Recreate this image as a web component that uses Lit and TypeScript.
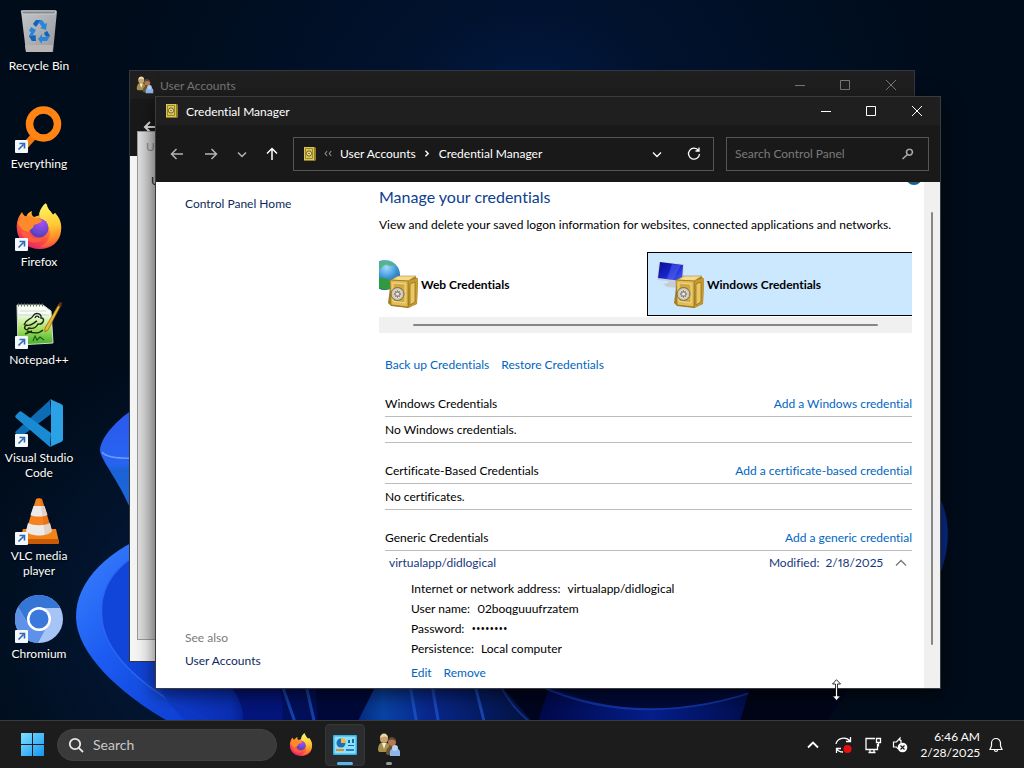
import { LitElement, html, svg, css } from "lit";
import { customElement, property } from "lit/decorators.js";

const shared = css`
  * { box-sizing: border-box; }
  button, input { font: inherit; color: inherit; background: none; border: 0; padding: 0; margin: 0; }
  button { display: flex; align-items: center; justify-content: center; }
  a { text-decoration: none; color: inherit; }
  svg { display: block; flex: none; }
  h1, h2, p, dl, dd, dt, ul { margin: 0; padding: 0; font-weight: 400; }
`;

const firefox = (size: number) => html`
  <svg width=${size} height=${size} viewBox="0 0 48 48" aria-hidden="true">
    <defs>
      <linearGradient id="ffBody" x1="0.8" y1="0.05" x2="0.3" y2="1">
        <stop offset="0" stop-color="#fff04a"/><stop offset="0.35" stop-color="#ffb02b"/>
        <stop offset="0.65" stop-color="#ff5a3a"/><stop offset="1" stop-color="#e9206b"/>
      </linearGradient>
      <linearGradient id="ffFlame" x1="0.5" y1="0" x2="0.6" y2="1">
        <stop offset="0" stop-color="#fff463"/><stop offset="0.5" stop-color="#ffcb34"/><stop offset="0.8" stop-color="#ff8a2a"/><stop offset="1" stop-color="#fb4a48"/>
      </linearGradient>
      <radialGradient id="ffGlobe" cx="0.6" cy="0.2" r="0.9">
        <stop offset="0" stop-color="#b04cf0"/><stop offset="0.6" stop-color="#6a48d0"/><stop offset="1" stop-color="#4a3aa8"/>
      </radialGradient>
    </defs>
    <path d="M7 9c1 3 3 4 4 5 1-3 3-5 6-6-1 3 0 5 2 6l9-3c1-4 1-8 4-10 0 5 4 7 6 11l2-2c5 5 7 11 6 18-1 11-10 18-21 18C12 46 3 38 2 27c-1-7 1-13 5-18z" fill="url(#ffBody)"/>
    <path d="M24 11c1-5 4-9 7-11 0 5 5 8 7 12l2-2c8 9 7 22-1 30-5 4-10 5-14 4 9-4 13-14 8-21-2-4-7-5-9-12z" fill="url(#ffFlame)"/>
    <circle cx="24" cy="25" r="9.500" fill="url(#ffGlobe)"/>
    <path d="M3 20c3-7 10-9 17-5 2 1 5 1 7 2-1 3-5 4-8 5-1 5-5 4-5 7-5 0-9-4-11-9z" fill="#ff8a2a"/>
    <path d="M14 29c1 7 9 8 15 5-4 8-17 7-21-1-2-3-3-5-4-8 3 3 6 5 10 4z" fill="#ff5a42"/>
  </svg>`;

const safe = (size: number) => html`
  <svg width=${size} height=${size} viewBox="0 0 14 14" aria-hidden="true">
    <path d="M1 0h11l1 1v12l-1 1H1z" fill="#8f7a25"/>
    <path d="M1 0h10v13H1z" fill="#d9c65a"/>
    <path d="M2.500 1.500h7v10h-7z" fill="none" stroke="#9c8729"/>
    <circle cx="6" cy="6.500" r="2.600" fill="#e9e2a0" stroke="#71611c"/>
    <circle cx="6" cy="6.500" r="0.800" fill="#5f5118"/>
  </svg>`;

const vault = svg`
  <path d="M20 20l7-4 18 1 2 3-1 24-9 4-17-2-3-3z" fill="#a67f22"/>
  <path d="M37 21l10-3-1 25-8 5z" fill="#c69a2f"/>
  <path d="M39 24l5-2v20l-5 3z" fill="#e9c766" stroke="#8e6b18" stroke-width="0.700"/>
  <path d="M20 20l7-4h18l-8 5z" fill="#f3dc8e" stroke="#9a7a25" stroke-width="0.500"/>
  <path d="M19 20l18 1v26l-17-2z" fill="#e2bd55" stroke="#987421" stroke-width="0.800"/>
  <path d="M22 23l12 1v19l-12-2z" fill="#d2a941" stroke="#f6e3a0" stroke-width="0.800"/>
  <circle cx="26.500" cy="34" r="6.500" fill="#cfc6b0" stroke="#776a4c" stroke-width="1"/>
  <circle cx="26.500" cy="34" r="4" fill="#a99f9a" stroke="#efe9da" stroke-width="1"/>
  <path d="M26.500 30v8M22.500 34h8M24 31l5 6M29 31l-5 6" stroke="#756a60" stroke-width="0.600"/>
  <circle cx="26.500" cy="34" r="1.500" fill="#eee"/>`;

const webVault = html`
  <svg width="48" height="48" viewBox="0 0 48 48" aria-hidden="true">
    <defs><radialGradient id="globe" cx="0.55" cy="0.25" r="0.7">
      <stop offset="0" stop-color="#9fdcff"/><stop offset="0.5" stop-color="#3b93d6"/><stop offset="1" stop-color="#12508f"/>
    </radialGradient></defs>
    <circle cx="14" cy="15" r="15" fill="url(#globe)"/>
    <path d="M1 8C5 1 16-1 24 4c2 1-2 1-4 2-3 0-4-2-6-1-4 2-3 4-7 5-2 0-4 0-6-2z" fill="#4fb56a" opacity="0.800"/>
    <path d="M6 19c5-3 9 0 14 1l-1 9c-5 2-12 0-16-4z" fill="#2f9a41"/>
    ${vault}
  </svg>`;

const pcVault = html`
  <svg width="48" height="48" viewBox="0 0 48 48" aria-hidden="true">
    <defs><linearGradient id="screen" x1="0" y1="0" x2="1" y2="1">
      <stop offset="0" stop-color="#0a0f8e"/><stop offset="0.5" stop-color="#1723c9"/><stop offset="1" stop-color="#4d63f4"/>
    </linearGradient></defs>
    <path d="M2 2l25 2-1 19L0 20z" fill="#c9cfe3"/>
    <path d="M3 2l23 3-1 16L1 18z" fill="url(#screen)"/>
    <path d="M15 4l9 1-8 15-6-1z" fill="#5b71f5" opacity="0.450"/>
    <path d="M11 21l7 1 1 4 3 2-12-1-4-3 5-1z" fill="#c8cbd3"/>
    ${vault}
  </svg>`;

const people = (size: number) => html`
  <svg width=${size} height=${size} viewBox="0 0 24 24" aria-hidden="true">
    <circle cx="7" cy="6" r="4" fill="#c9a26c"/><path d="M3 5c0-6 8-6 8 0-2-2-5-2-8 0z" fill="#e8d9a4"/>
    <path d="M1 17c0-6 3-8 6-8s6 2 6 7l-4 3H2z" fill="#a5914c"/>
    <path d="M5 10l2 6 2-6z" fill="#f4f0dd"/>
    <circle cx="15" cy="9" r="4" fill="#b27a50"/><path d="M11 8c0-6 8-5 8 1-2-3-5-3-8-1z" fill="#5e4630"/>
    <path d="M9 21c0-6 3-8 6-8s6 2 6 8l-4 1h-6z" fill="#6a5636"/>
    <path d="M13 19c0-5 10-5 10 0v4H13z" fill="#8fb7ea"/><circle cx="18" cy="15" r="3" fill="#b9d2f3"/>
  </svg>`;

const art: Record<string, unknown> = {
  bin: html`<svg width="48" height="48" viewBox="0 0 48 48" aria-hidden="true">
    <defs><linearGradient id="pail" x1="0" y1="0" x2="1" y2="1"><stop offset="0" stop-color="#c3c6ca"/><stop offset="1" stop-color="#96999c"/></linearGradient></defs>
    <path d="M6 4l4-1h28l4 1-4 41H11z" fill="url(#pail)"/>
    <path d="M6 4l4-1h28l4 1-2 3H8z" fill="#85898c"/><path d="M8 7h32l1-3H6z" fill="none" stroke="#c9cccf"/>
    <path d="M10 38h28l-1 7H11z" fill="#b9b5b4"/>
    <g fill="#2a86d8"><path d="M18 17l3-4h6l3 4 2-1-1 7-6-2 2-1-3-4-2 3z"/><path d="M16 20l5 3-3 5h3v6h-4l-3-5 2-4-2-1z"/><path d="M32 24l3 5-3 5h-5v3l-4-5 4-5v3h4l-2-3z"/></g>
    <path d="M18 17l3-4h4l-4 7zM14 29h6l1 5h-4zM32 24l3 5h-4l-2-3z" fill="#1762b4"/>
  </svg>`,
  everything: html`<svg width="48" height="48" viewBox="0 0 48 48" aria-hidden="true">
    <path d="M19 31L8 43" stroke="#f47a10" stroke-width="7"/><circle cx="28.500" cy="19" r="14" fill="none" stroke="#ff8413" stroke-width="7.500"/>
  </svg>`,
  firefox: firefox(48),
  notepad: html`<svg width="48" height="48" viewBox="0 0 48 48" aria-hidden="true">
    <defs><linearGradient id="sheet" x1="0" y1="0" x2="0" y2="1"><stop offset="0.200" stop-color="#fafff6"/><stop offset="0.600" stop-color="#a5e05e"/><stop offset="1" stop-color="#3fae2a"/></linearGradient></defs>
    <path d="M2 4h26l8 6 2 32-35 2z" fill="url(#sheet)" stroke="#d5dccd"/>
    <path d="M3 4h25" stroke="#6d7568" stroke-width="3" stroke-dasharray="1 2"/>
    <path d="M5 10h26M4 14h30" stroke="#b9c5d0" stroke-width="0.700"/>
    <path d="M9 24c3-7 7-5 9-9 2-4 9-3 8 2 5 0 2 7-3 6-2 4-5 5-9 4-3 4-6 0-3-3 5 2 7-2 11-4M12 30c5 2 12 3 16-1M20 17c1-3 4-2 4 0M10 33l7-3" fill="none" stroke="#1c2a12" stroke-width="1.400"/>
    <path d="M18 40l2-5 2 4 3-3 4 3" fill="none" stroke="#195a12" stroke-width="1.100"/>
    <path d="M30 27L44 3l2 1-13 25-3 2z" fill="#eebb32" stroke="#855c13" stroke-width="0.700"/><path d="M43 5l2-4 2 1-1 4z" fill="#6e2f20"/>
  </svg>`,
  code: html`<svg width="48" height="48" viewBox="0 0 48 48" aria-hidden="true">
    <path d="M35 1L1 32c-1 1-1 2 0 3l3 2c1 1 2 1 3 0L36 15z" fill="#0c6db5"/>
    <path d="M7 13c-1-1-2-1-3 0l-3 3c-1 1-1 2 0 3l34 29 1-14z" fill="#1a8ad3"/>
    <path d="M35 1c1-1 1-1 2 0l9 4c2 1 2 2 2 3v32c0 1 0 2-2 3l-9 4c-1 1-1 1-2 0l1-1V2z" fill="#2ba2e6"/>
  </svg>`,
  vlc: html`<svg width="48" height="48" viewBox="0 0 48 48" aria-hidden="true">
    <path d="M8 32h33l3 13c0 1 0 2-2 2H6c-2 0-2-1-2-2z" fill="#f08417"/><path d="M5 42h38l1 3c0 1 0 2-2 2H6c-2 0-2-1-2-2z" fill="#c95a08"/>
    <path d="M21 2c1-1 5-1 6 0l10 32c-4 6-22 6-26 0z" fill="#f5821f"/>
    <path d="M18.500 9h11l3 9c-4 2-13 2-17 0zM13 26c6 3 16 3 22 0l2 8c-4 6-22 6-26 0z" fill="#ecebea"/>
    <path d="M27 2l10 32c-2 2-4 3-7 4L25 2z" fill="#a83e00" opacity="0.150"/>
  </svg>`,
  chromium: html`<svg width="48" height="48" viewBox="0 0 48 48" aria-hidden="true">
    <circle cx="24" cy="24" r="24" fill="#a6c4f6"/>
    <path d="M24 0a24 24 0 0 1 21 13H24L14 30 3 12A24 24 0 0 1 24 0z" fill="#3575d6"/>
    <path d="M3 12l11 18 10 6 6-1-7 13A24 24 0 0 1 3 12z" fill="#5d92e8"/>
    <circle cx="24" cy="24" r="12" fill="#fff"/><circle cx="24" cy="24" r="9.500" fill="#3a78dc"/>
  </svg>`,
};

const arrow = (d: string, size = 16, width = 1) => html`
  <svg width=${size} height=${size} viewBox="0 0 16 16" fill="none" stroke="currentColor" stroke-width=${width} aria-hidden="true"><path d=${d}/></svg>`;

@customElement("desktop-wallpaper")
class DesktopWallpaper extends LitElement {
  static styles = css`:host { display: block; } svg { display: block; width: 100%; height: 100%; }`;
  render() {
    return html`<svg viewBox="0 0 1024 768" preserveAspectRatio="xMidYMid slice" aria-hidden="true">
      <defs>
        <radialGradient id="glow" gradientUnits="userSpaceOnUse" cx="530" cy="150" r="420"><stop offset="0" stop-color="#021c4e"/><stop offset="0.350" stop-color="#01122e"/><stop offset="1" stop-color="#000c1a"/></radialGradient>
        <radialGradient id="haze" gradientUnits="userSpaceOnUse" cx="230" cy="620" r="280"><stop offset="0" stop-color="#041c42"/><stop offset="1" stop-color="#041c42" stop-opacity="0"/></radialGradient>
        <linearGradient id="petalA" x1="0" y1="0" x2="1" y2="1"><stop offset="0" stop-color="#3f86ff"/><stop offset="0.400" stop-color="#1c5cf2"/><stop offset="1" stop-color="#0733c8"/></linearGradient>
        <linearGradient id="petalB" x1="0" y1="0" x2="0" y2="1"><stop offset="0" stop-color="#2b56ee"/><stop offset="0.500" stop-color="#2864f0"/><stop offset="0.550" stop-color="#1a62d6"/><stop offset="1" stop-color="#1b6be0"/></linearGradient>
        <linearGradient id="fold" x1="0" y1="0" x2="1" y2="0"><stop offset="0" stop-color="#1040d8"/><stop offset="0.200" stop-color="#0a2cae"/><stop offset="0.260" stop-color="#021070"/><stop offset="0.460" stop-color="#010f55"/><stop offset="0.600" stop-color="#0a49b4"/><stop offset="0.720" stop-color="#0a2a9a"/><stop offset="1" stop-color="#02123f"/></linearGradient>
        <linearGradient id="bowl" x1="0" y1="0" x2="1" y2="0"><stop offset="0" stop-color="#010848"/><stop offset="0.500" stop-color="#051f8c"/><stop offset="1" stop-color="#010a40"/></linearGradient>
      </defs>
      <rect width="1024" height="768" fill="url(#glow)"/>
      <rect width="520" height="768" fill="url(#haze)"/>
      <path d="M140 405c-18 10-39 30-40 45 0 10 22 34 34 68l20 10V400z" fill="url(#petalB)"/>
      <path d="M102 452c4 6 20 7 40 6" stroke="#6a9cff" fill="none" stroke-width="1.500"/>
      <path d="M160 530c-50 18-85 50-84 88 1 34 40 74 95 105h80V530z" fill="url(#petalA)"/>
      <path d="M150 548c-35 15-52 40-48 72 4 38 50 76 110 102h60V548z" fill="#1144d8"/>
      <path d="M150 548c-35 15-52 40-48 72 4 38 50 76 110 102" fill="none" stroke="#2a68f4" stroke-width="1.500"/>
      <path d="M155 680h380v60H205c-20-18-40-38-50-60z" fill="url(#fold)" opacity="0.900"/>
      <path d="M225 680c14 14 20 30 18 45h39c2-18 0-30-4-45z" fill="#04157c"/>
      <path d="M282 685l14 40M306 685l9 40M410 685l7 40M432 685l7 40M475 685l10 40" stroke="#2360e0" stroke-width="3" fill="none" opacity="0.600"/>
      <path d="M500 685c8 16 20 30 34 40" stroke="#1a3a9a" stroke-width="2" fill="none" opacity="0.700"/>
      <path d="M316 685h60l-20 40h-38z" fill="#01093a"/>
      <path d="M500 685h350l-28 45H540z" fill="#01051f"/>
      <path d="M550 685c60 32 140 30 220 0l-10 45H535z" fill="url(#bowl)"/>
      <path d="M550 685c60 32 140 30 220 0z" fill="#010a38"/>
      <path d="M540 686c70 32 150 30 230 0" fill="none" stroke="#1540b8" stroke-width="2" opacity="0.700"/>
      <path d="M750 688h90c-8 14-10 24-14 40h-88z" fill="#010517"/>
      <path d="M938 495c12 20 14 50 0 85z" fill="#082c8c"/>
    </svg>`;
  }
}

@customElement("desktop-shortcut")
class DesktopShortcut extends LitElement {
  @property() label = "";
  @property() icon = "";
  @property({ type: Boolean }) link = false;
  static styles = [shared, css`
    :host { display: block; height: 98px; }
    .cell { width: 100%; flex-direction: column; gap: 3px; color: #fff; font-size: 12px; line-height: 15px; text-shadow: 0 1px 2px #000; }
    .pic { position: relative; }
    .badge { position: absolute; left: 0; bottom: 0; }
  `];
  render() {
    return html`<button class="cell">
      <span class="pic">${art[this.icon]}
        ${this.link ? html`<svg class="badge" width="13" height="13" viewBox="0 0 13 13" aria-hidden="true"><rect width="13" height="13" rx="1" fill="#f4f7fb"/><path d="M3.500 9.500l5-5M4.500 3.500h5v5" fill="none" stroke="#2c6ab5" stroke-width="1.600"/></svg>` : ""}
      </span>
      <span>${this.label}</span>
    </button>`;
  }
}

@customElement("caption-buttons")
class CaptionButtons extends LitElement {
  static styles = [shared, css`
    :host { display: flex; align-self: stretch; }
    button { width: 46px; }
  `];
  render() {
    const d = ["M4 8.500h10", "M3.500 3.500h9v9h-9z", "M3 3l10 10M13 3L3 13"];
    return html`${["Minimize", "Maximize", "Close"].map((n, i) => html`<button aria-label=${n}>${arrow(d[i])}</button>`)}`;
  }
}

@customElement("accounts-window")
class AccountsWindow extends LitElement {
  static styles = [shared, css`
    :host { display: flex; flex-direction: column; background: #f5f5f5; border: 1px solid #34383c; overflow: hidden; font-size: 12px; }
    .title { display: flex; align-items: center; height: 28px; padding-left: 6px; gap: 6px; background: #1f1f1f; color: #777; }
    .title h2 { flex: 1; font-size: 12px; }
    .nav { height: 57px; background: #191919; color: #ddd; padding: 20px 12px; }
    .dialog { position: absolute; left: 7px; top: 60px; bottom: 21px; width: 300px; background: linear-gradient(90deg, #e0e0e0, #c4c4c4 20px); border: 1px solid #9b9b9b; color: #8a8a8a; padding: 6px 8px; }
    .dialog p { line-height: 18px; }
    .dialog .second { color: #222; padding: 16px 5px; }
  `];
  render() {
    return html`
      <div class="title">${people(18)}<h2>User Accounts</h2><caption-buttons></caption-buttons></div>
      <div class="nav">${arrow("M8 3L3 8l5 5M3 8h11", 16, 2)}</div>
      <div class="dialog"><p>User Accounts</p><p class="second">Users</p></div>`;
  }
}

@customElement("credential-section")
class CredentialSection extends LitElement {
  @property() heading = "";
  @property() action = "";
  @property() empty = "";
  static styles = [shared, css`
    :host { display: block; margin-left: 6px; }
    .head { display: flex; justify-content: space-between; height: 26px; line-height: 26px; border-bottom: 1px solid #bcbcbc; }
    .head h2 { font-size: inherit; }
    a { color: #0066bf; }
    .empty { height: 26px; line-height: 26px; border-bottom: 1px solid #bcbcbc; }
    .gap { height: 15px; }
  `];
  render() {
    return html`<div class="head"><h2>${this.heading}</h2><a href="#">${this.action}</a></div>
      ${this.empty ? html`<p class="empty">${this.empty}</p><div class="gap"></div>` : html`<slot></slot>`}`;
  }
}

@customElement("credential-window")
class CredentialWindow extends LitElement {
  static styles = [shared, css`
    :host { display: flex; flex-direction: column; background: #fff; border: 1px solid #3c3c3c; overflow: hidden; color: #000; font-size: 12px; box-shadow: 0 6px 18px #0009; }
    .title { display: flex; align-items: center; flex: none; height: 28px; padding-left: 9px; gap: 7px; background: #1f1f1f; color: #fff; }
    .title h1 { flex: 1; font-size: 12px; }
    .nav { display: flex; align-items: center; flex: none; height: 57px; padding: 0 11px 0 9px; background: #191919; color: #fff; }
    .nav > button { width: 24px; height: 24px; color: #b4b4b4; }
    .nav .fwd { margin-left: 10px; }
    .nav .recent { margin-left: 9px; width: 20px; }
    .nav .up { margin-left: 8px; color: #fff; margin-right: 9px; }
    .box { display: flex; align-items: center; height: 34px; border: 1px solid #555; padding: 0 9px; }
    .path { flex: 1; gap: 6px; }
    .path .more { color: #8c8c8c; }
    .path .icons { display: flex; margin-left: auto; gap: 21px; align-items: center; padding-right: 2px; }
    .find { width: 203px; margin-left: 12px; padding: 0 12px 0 8px; }
    .find input { flex: 1; min-width: 0; outline: 0; }
    .find input::placeholder { color: #7b7b7b; opacity: 1; }
    .find svg { color: #aaa; }
    .body { display: flex; flex: 1; min-height: 0; position: relative; }
    .side { display: flex; flex-direction: column; width: 223px; padding: 13px 29px 18px; color: #0c2a5c; line-height: 18px; }
    .side .also { margin-top: auto; margin-bottom: 5px; color: #7a7a7a; }
    main { flex: 1; min-width: 0; padding: 3px 12px 0 0; }
    main h1 { font-size: 16px; line-height: 24px; color: #0d4090; }
    .lead { line-height: 18px; margin: 7px 0 18px; white-space: nowrap; }
    .tabs { display: flex; overflow: hidden; }
    .tab { flex: none; width: 286px; height: 64px; justify-content: flex-start; padding-left: 9px; gap: 2px; border: 1px solid transparent; font-weight: 700; }
    .tab.web { margin-left: -18px; }
    .tab.on { background: #cce8ff; border-color: #000; }
    .hbar { height: 16px; margin: 1px 0 23px; background: #f0f0f0; padding: 7px 34px; }
    .hbar i { display: block; height: 2px; border-radius: 1px; background: #868686; }
    .links { display: flex; gap: 12px; margin: 0 0 17px 6px; line-height: 18px; color: #0066bf; }
    .row { display: flex; align-items: center; height: 23px; padding: 0 3px 0 4px; color: #16387c; }
    .row .date { margin-left: auto; margin-right: 10px; white-space: pre; }
    .row svg { color: #777; }
    dl { padding: 5px 0 0 26px; line-height: 20px; }
    dl div { display: flex; gap: 7px; }
    .secret { font-family: "Open Sans", sans-serif; }
    .edit { display: flex; gap: 12px; padding: 4px 0 0 26px; line-height: 20px; color: #0066bf; }
    .vbar { width: 16px; background: #f0f0f0; padding: 30px 7px 43px 7px; }
    .vbar i { display: block; height: 100%; border-radius: 1px; background: #868686; }
    .help { position: absolute; right: 18px; top: -13px; width: 16px; height: 16px; border-radius: 8px; background: #17608d; }
    .clip { position: absolute; inset: 0; overflow: hidden; pointer-events: none; }
  `];
  render() {
    return html`
      <div class="title">${safe(14)}<h1>Credential Manager</h1><caption-buttons></caption-buttons></div>
      <div class="nav">
        <button aria-label="Back">${arrow("M7.500 3L2.500 8l5 5M3 8h11", 16, 1.5)}</button>
        <button class="fwd" aria-label="Forward">${arrow("M8.500 3l5 5-5 5M13 8H2", 16, 1.5)}</button>
        <button class="recent" aria-label="Recent locations">${arrow("M4 6.500l4 4 4-4", 16, 1.5)}</button>
        <button class="up" aria-label="Up">${arrow("M3 7.500l5-5 5 5M8 3v11", 16, 1.5)}</button>
        <div class="box path">${safe(14)}
          <span class="more">${arrow("M6 4.500L3 8l3 3.500M12 4.500L9 8l3 3.500", 11, 1.5)}</span>
          <a href="#">User Accounts</a>${arrow("M5 4l4 4-4 4", 11, 2)}<a href="#">Credential Manager</a>
          <span class="icons">
            <button aria-label="Previous locations">${arrow("M4 6.500l4 4 4-4", 16, 1.3)}</button>
            <button aria-label="Refresh">${arrow("M12.500 4.500A5.500 5.500 0 1 0 13.500 8M13 1.500V5H9.500", 16, 1.3)}</button>
          </span>
        </div>
        <div class="box find"><input type="text" aria-label="Search Control Panel" placeholder="Search Control Panel">
          ${arrow("M9.500 3.200a3 3 0 1 1-0.100 0M7.500 8.500L2.500 13", 16, 1.6)}</div>
      </div>
      <div class="body">
        <nav class="side"><a href="#">Control Panel Home</a><span class="also">See also</span><a href="#">User Accounts</a></nav>
        <main>
          <h1>Manage your credentials</h1>
          <p class="lead">View and delete your saved logon information for websites, connected applications and networks.</p>
          <div class="tabs">
            <button class="tab web">${webVault}Web Credentials</button>
            <button class="tab on">${pcVault}Windows Credentials</button>
          </div>
          <div class="hbar"><i></i></div>
          <div class="links"><a href="#">Back up Credentials</a><a href="#">Restore Credentials</a></div>
          <credential-section heading="Windows Credentials" action="Add a Windows credential" empty="No Windows credentials."></credential-section>
          <credential-section heading="Certificate-Based Credentials" action="Add a certificate-based credential" empty="No certificates."></credential-section>
          <credential-section heading="Generic Credentials" action="Add a generic credential">
            <div class="row"><span>virtualapp/didlogical</span><span class="date">Modified:  2/18/2025</span>${arrow("M3 10.500l5-5 5 5", 16, 1.3)}</div>
            <dl>
              <div><dt>Internet or network address:</dt><dd>virtualapp/didlogical</dd></div>
              <div><dt>User name:</dt><dd>02boqguuufrzatem</dd></div>
              <div><dt>Password:</dt><dd class="secret">••••••••</dd></div>
              <div><dt>Persistence:</dt><dd>Local computer</dd></div>
            </dl>
            <div class="edit"><a href="#">Edit</a><a href="#">Remove</a></div>
          </credential-section>
        </main>
        <div class="vbar"><i></i></div>
        <div class="clip"><div class="help"></div></div>
      </div>`;
  }
}

@customElement("task-bar")
class TaskBar extends LitElement {
  static styles = [shared, css`
    :host { display: flex; align-items: center; height: 48px; padding: 0 20px 0 20px; background: #1c1c1c; border-top: 1px solid #393a3c; color: #fff; font-size: 12px; }
    .search { display: flex; align-items: center; gap: 9px; width: 220px; height: 32px; margin-left: 12px; padding: 0 10px; border-radius: 16px; background: #3a3a3a; border: 1px solid #424242; }
    .search input { flex: 1; min-width: 0; outline: 0; font-size: 14px; }
    .search input::placeholder { color: #c8c8c8; opacity: 1; }
    .app { position: relative; width: 40px; height: 42px; border-radius: 4px; margin-left: 4px; }
    .app.on { background: #2b2c2d; border: 1px solid #353637; }
    .app::after { content: ""; position: absolute; bottom: 1px; height: 3px; border-radius: 2px; }
    .app.on::after { width: 16px; background: #58b8ee; bottom: 0; }
    .app.idle::after { width: 6px; background: #999; }
    .tray { display: flex; align-items: center; margin-left: auto; gap: 8px; }
    .tray .mid { margin: 0 5px; display: flex; align-items: center; gap: 9px; }
    .clock { flex-direction: column; align-items: flex-end; line-height: 16px; }
  `];
  render() {
    return html`
      <button aria-label="Start"><svg width="25" height="24" viewBox="0 0 25 24" aria-hidden="true"><defs><linearGradient id="win" x1="0" y1="0" x2="1" y2="1"><stop offset="0" stop-color="#7fe0ff"/><stop offset="1" stop-color="#1496f0"/></linearGradient></defs><path d="M1 0h11v11H1zM13 0h11v11H13zM1 12h11v11H1zM13 12h11v11H13z" fill="url(#win)"/></svg></button>
      <label class="search"><svg width="16" height="16" viewBox="0 0 16 16" fill="none" stroke="#e8e8e8" stroke-width="1.800" aria-hidden="true"><circle cx="7" cy="7" r="5.200"/><path d="M10.800 10.800L15 15"/></svg><input type="text" placeholder="Search" aria-label="Search"></label>
      <button class="app" aria-label="Firefox">${firefox(24)}</button>
      <button class="app on" aria-label="Control Panel"><svg width="24" height="20" viewBox="0 0 24 20" aria-hidden="true"><rect width="24" height="20" rx="1" fill="#35b4e8"/><rect x="1.500" y="1.500" width="21" height="17" fill="#8fe0fb"/><circle cx="8" cy="8" r="4.500" fill="#1870b8"/><path d="M8 8V3a5 5 0 0 1 5 5z" fill="#ffb52e"/><path d="M15 5h2v3h-2zM19 4h2v4h-2zM15 10h6v1h-6z" fill="#0f6aa8"/><path d="M3 14h8v2H3z" fill="#e58b23"/><path d="M13 14h8v2h-8z" fill="#2a7fc4"/></svg></button>
      <button class="app idle" aria-label="User Accounts">${people(24)}</button>
      <div class="tray">
        <button aria-label="Show hidden icons">${arrow("M3 10.500l5-5 5 5", 16, 1.8)}</button>
        <span class="mid">
          <button aria-label="Update"><svg width="20" height="20" viewBox="0 0 20 20" fill="none" stroke="#fff" stroke-width="1.300" aria-hidden="true"><path d="M2 9c1-6 10-8 14-3M16.500 2v4.500H12M9 17c-3 0-5-1-6-3M2.500 18v-4.500H7"/><circle cx="13.500" cy="14" r="4" fill="#e81010" stroke="none"/></svg></button>
          <button aria-label="Network"><svg width="20" height="20" viewBox="0 0 20 20" fill="none" stroke="#fff" stroke-width="1.300" aria-hidden="true"><path d="M12 3.500H3v11h11.500V9M5.500 17.500h7M7 14.500v3M11 14.500v3M13.500 3.500h4v4h-4zM15.500 7.500v4"/></svg></button>
          <button aria-label="Volume"><svg width="16" height="18" viewBox="0 0 16 18" aria-hidden="true"><path d="M8 5V2L4.500 6H1.500v5h3L6 13M9 4v3" fill="none" stroke="#fff" stroke-width="1.200"/><circle cx="10.500" cy="11.500" r="4.800" fill="#fff"/><path d="M8.500 9.500l4 4M12.500 9.500l-4 4" stroke="#1c1c1c" stroke-width="1.200"/></svg></button>
        </span>
        <button class="clock"><span>6:46 AM</span><span>2/28/2025</span></button>
        <button aria-label="Notifications"><svg width="16" height="16" viewBox="0 0 16 16" fill="none" stroke="#fff" stroke-width="1.200" aria-hidden="true"><path d="M2 12.500h12L12.500 9V6a4.500 4.500 0 0 0-9 0v3zM6.500 13c0 2 3 2 3 0"/></svg></button>
      </div>`;
  }
}

@customElement("app-root")
class AppRoot extends LitElement {
  static styles = [shared, css`
    :host { display: flex; flex-direction: column; height: 100vh; overflow: hidden; position: relative; font-family: Lato, "Open Sans", sans-serif; font-size: 12px; font-variant-ligatures: none; font-variant-numeric: proportional-nums; background: #000d1e; }
    desktop-wallpaper { position: absolute; inset: 0; }
    .desk { flex: 1; position: relative; }
    .icons { width: 78px; padding-top: 7px; }
    accounts-window { position: absolute; left: 129px; top: 70px; right: 109px; bottom: 58px; }
    credential-window { position: absolute; left: 155px; top: 96px; right: 83px; bottom: 31px; }
    task-bar { position: relative; }
    .cursor { position: absolute; left: 832px; top: 679px; }
  `];
  render() {
    const items = [
      { icon: "bin", label: "Recycle Bin", link: false },
      { icon: "everything", label: "Everything", link: true },
      { icon: "firefox", label: "Firefox", link: true },
      { icon: "notepad", label: "Notepad++", link: true },
      { icon: "code", label: "Visual Studio Code", link: true },
      { icon: "vlc", label: "VLC media player", link: true },
      { icon: "chromium", label: "Chromium", link: true },
    ];
    return html`
      <desktop-wallpaper></desktop-wallpaper>
      <div class="desk">
        <div class="icons">${items.map((i) => html`<desktop-shortcut icon=${i.icon} label=${i.label} ?link=${i.link}></desktop-shortcut>`)}</div>
        <accounts-window></accounts-window>
        <credential-window></credential-window>
      </div>
      <task-bar></task-bar>
      <svg class="cursor" width="9" height="23" viewBox="0 0 9 23" aria-hidden="true"><path d="M4.500 0.700L8.500 5H5.500v12h3l-4 4.500L0.500 17h3V5h-3z" fill="#fff" stroke="#000" stroke-width="0.800"/></svg>`;
  }
}
